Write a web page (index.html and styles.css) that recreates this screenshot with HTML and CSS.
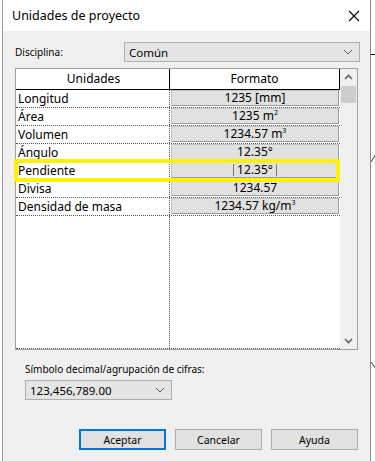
FILE: index.html
```html
<!DOCTYPE html>
<html lang="es">
<head>
<meta charset="UTF-8">
<meta name="viewport" content="width=device-width, initial-scale=1.0">
<title>Unidades de proyecto</title>
<link rel="stylesheet" href="styles.css">
</head>
<body>
<div class="dialog">
  <!-- barra de título -->
  <div class="titlebar">
    <span class="title">Unidades de proyecto</span>
    <svg class="close" width="12" height="12" viewBox="0 0 12 12"><path d="M1 1L11 11M11 1L1 11" stroke="#000" stroke-width="1.1" fill="none"/></svg>
  </div>
  <div class="content">
    <div class="discipline">
      <span class="label">Disciplina:</span>
      <div class="select wide">
        <span>Común</span>
        <svg width="10" height="6" viewBox="0 0 10 6"><path d="M1 1L5 5L9 1" stroke="#5a5a5a" stroke-width="1" fill="none"/></svg>
      </div>
    </div>
    <!-- tabla de unidades -->
    <div class="grid-frame">
      <div class="grid">
        <div class="row head">
          <div class="cell name">Unidades</div>
          <div class="cell fmt">Formato</div>
        </div>
        <div class="row"><div class="cell name">Longitud</div><div class="cell fmt"><div class="value">1235 [mm]</div></div></div>
        <div class="row"><div class="cell name">Área</div><div class="cell fmt"><div class="value">1235 m<sup>2</sup></div></div></div>
        <div class="row"><div class="cell name">Volumen</div><div class="cell fmt"><div class="value">1234.57 m<sup>3</sup></div></div></div>
        <div class="row"><div class="cell name">Ángulo</div><div class="cell fmt"><div class="value">12.35°</div></div></div>
        <div class="row"><div class="cell name">Pendiente</div><div class="cell fmt"><div class="value"><span class="bar"></span>12.35°<span class="bar"></span></div></div></div>
        <div class="row"><div class="cell name">Divisa</div><div class="cell fmt"><div class="value">1234.57</div></div></div>
        <div class="row"><div class="cell name">Densidad de masa</div><div class="cell fmt"><div class="value">1234.57 kg/m<sup>3</sup></div></div></div>
        <div class="row empty"><div class="cell name"></div><div class="cell fmt"></div></div>
      </div>
      <div class="scrollbar">
        <svg class="arrow" width="17" height="17" viewBox="0 0 17 17"><path d="M5 10L8.5 6.5L12 10" stroke="#606060" stroke-width="1.6" fill="none"/></svg>
        <div class="thumb"></div>
        <div class="track"></div>
        <svg class="arrow" width="17" height="17" viewBox="0 0 17 17"><path d="M5 7L8.5 10.5L12 7" stroke="#606060" stroke-width="1.6" fill="none"/></svg>
      </div>
      <div class="highlight"></div>
    </div>
    <div class="decimal">
      <span class="label">Símbolo decimal/agrupación de cifras:</span>
      <div class="select small">
        <span>123,456,789.00</span>
        <svg width="10" height="6" viewBox="0 0 10 6"><path d="M1 1L5 5L9 1" stroke="#5a5a5a" stroke-width="1" fill="none"/></svg>
      </div>
    </div>
    <div class="buttons">
      <button class="btn default">Aceptar</button>
      <button class="btn">Cancelar</button>
      <button class="btn">Ayuda</button>
    </div>
  </div>
</div>
<!-- trazos del dibujo detrás de la ventana -->
<div class="backline"></div>
<svg class="mark mark-a" width="5" height="8" viewBox="0 0 5 8"><path d="M0 8L5 0" stroke="#333" stroke-width="1" fill="none"/></svg>
<svg class="mark mark-b" width="5" height="7" viewBox="0 0 5 7"><path d="M0 0L5 7" stroke="#333" stroke-width="1" fill="none"/></svg>
</body>
</html>
```
FILE: styles.css
```css
/* ventana de diálogo estilo Windows */
body, html {
  margin: 0;
  padding: 0;
  width: 375px;
  height: 461px;
  overflow: hidden;
  background: #fff;
  font-family: "Noto Sans", "Open Sans", sans-serif;
  font-size: 12px;
  color: #000;
}
.dialog {
  margin-left: 2px;
  width: 367px;
  height: 461px;
  border-left: 1px solid #9a9a9a;
  border-right: 1px solid #8a8a8a;
  display: flex;
  flex-direction: column;
}
.titlebar {
  height: 31px;
  background: #fff;
  display: flex;
  align-items: center;
  justify-content: space-between;
  padding: 0 10px 0 9px;
}
.title {
  font-size: 12.5px;
}
.close {
  display: block;
}
.content {
  flex: 1;
  background: #f0f0f0;
  padding: 11px 0 0 12px;
}
.label {
  font-size: 10px;
}
/* selector de disciplina */
.discipline {
  display: flex;
  align-items: center;
  height: 20px;
}
.discipline .label {
  width: 109px;
}
.select {
  height: 18px;
  background: #e5e5e5;
  border: 1px solid #adadad;
  display: flex;
  align-items: center;
  justify-content: space-between;
  padding: 0 6px 0 4px;
  font-size: 11.5px;
}
.select.wide {
  width: 224px;
}
.select.small {
  width: 135px;
}
/* tabla */
.grid-frame {
  position: relative;
  margin-top: 6px;
  width: 341px;
  height: 280px;
  border: 1px solid #a0a0a0;
  background: #fff;
  display: flex;
}
.grid {
  width: 324px;
  display: flex;
  flex-direction: column;
}
.row {
  display: flex;
  height: 18px;
  border-bottom: 1px dotted #555;
  box-sizing: border-box;
}
.row.head {
  height: 21px;
  border-bottom: 1px solid #000;
  background: #fff;
}
.row.empty {
  flex: 1;
}
.cell {
  box-sizing: border-box;
}
.cell.name {
  width: 154px;
  padding-left: 2px;
  line-height: 17px;
  border-right: 1px dotted #555;
}
.cell.fmt {
  flex: 1;
  padding: 0 1px 0 1px;
}
.head .cell {
  text-align: center;
  line-height: 20px;
}
.head .cell.name {
  border-right: 1px solid #000;
}
.head .cell.fmt {
  border-right: 1px solid #000;
  padding: 0;
}
.value {
  height: 16px;
  box-sizing: border-box;
  background: #e1e1e1;
  border: 1px solid #c4c4c4;
  border-bottom-color: #9c9c9c;
  border-right-color: #9c9c9c;
  text-align: center;
  line-height: 14px;
}
.value sup {
  font-size: 7px;
  vertical-align: 5px;
  line-height: 0;
}
.bar {
  display: inline-block;
  width: 1px;
  height: 12px;
  background: #777;
  vertical-align: -2px;
  margin: 0 3px;
}
/* barra de desplazamiento */
.scrollbar {
  width: 17px;
  background: #f0f0f0;
  display: flex;
  flex-direction: column;
}
.arrow {
  display: block;
}
.thumb {
  height: 17px;
  margin: 0 1px;
  background: #cdcdcd;
}
.track {
  flex: 1;
}
/* marco amarillo */
.highlight {
  position: absolute;
  left: -2px;
  top: 90px;
  width: 318px;
  height: 15px;
  border: 4px solid #fff200;
}
/* parte inferior */
.decimal {
  margin: 12px 0 0 10px;
  display: flex;
  flex-direction: column;
  gap: 4px;
}
.buttons {
  margin-top: 29px;
  display: flex;
  gap: 9px;
  padding-left: 64px;
}
.btn {
  width: 87px;
  height: 21px;
  background: #e1e1e1;
  border: 1px solid #adadad;
  font-family: inherit;
  font-size: 10.5px;
  padding: 0;
  color: #000;
}
.btn.default {
  border: 2px solid #0078d7;
}
.backline {
  position: absolute;
  left: 371px;
  top: 54px;
  width: 4px;
  height: 1px;
  background: #000;
}
.mark {
  position: absolute;
}
.mark-a {
  left: 371px;
  top: 154px;
}
.mark-b {
  left: 371px;
  top: 362px;
}
```
